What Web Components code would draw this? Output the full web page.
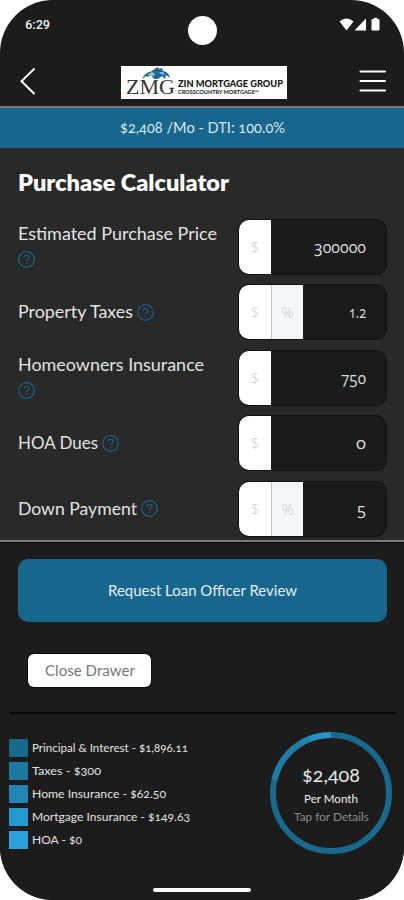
<!DOCTYPE html>
<html lang="en"><head><meta charset="utf-8"><title>Purchase Calculator</title>
<style>
html,body{margin:0;background:#fff}
body{width:404px;height:900px;overflow:hidden;font-family:Lato,"Open Sans",sans-serif;color:#e6e6e6}
</style></head><body>
<zm-phone></zm-phone>
<script>
const define=(name,css,html,init)=>customElements.define(name,class extends HTMLElement{
  connectedCallback(){
    if(this.shadowRoot)return;
    const root=this.attachShadow({mode:'open'});
    root.innerHTML=`<style>*{box-sizing:border-box}${css}</style>`+(typeof html==='function'?html(this):html);
    if(init)init(this,root);
  }
});

/* Single line whose glyphs are widened or narrowed to fill the width given in w. */
define('zm-text',':host{display:inline-block;white-space:nowrap;font-variant-numeric:oldstyle-nums}:host([lining]){font-variant-numeric:lining-nums}span{display:inline-block;transform-origin:0 50%}','<span><slot></slot></span>',(el,root)=>{
  const w=parseFloat(el.getAttribute('w')),s=root.querySelector('span');
  s.style.transform=`scaleX(${(w/s.getBoundingClientRect().width).toFixed(4)})`;
  el.style.width=w+'px';
});

define('zm-status',`:host{display:grid;grid-template-columns:1fr 30px 1fr;height:56px;padding:0 23px 0 25px;align-items:start}
.t{font:500 12.5px/16px Roboto,sans-serif;color:#eee;padding-top:17px}
.cam{width:29px;height:29px;border-radius:50%;background:#fff;margin-top:16px}
svg{justify-self:end;margin-top:17px}`,
`<div class="t"><zm-text w="25" lining>6:29</zm-text></div><div class="cam"></div>
<svg width="42" height="15" viewBox="0 0 42 15" fill="#fff"><path d="M.5 4.5Q7.5-1.5 14.5 4.5L7.5 13.5Z"/><path d="M15.5 13.5H27V1.5Z"/><path d="M32.5 3q0-1 1-1h1.3V.8h3.4V2h1.300q1 0 1 1v9.500q0 1-1 1h-6q-1 0-1-1Z"/></svg>`);

define('zm-logo',`:host{display:flex;width:166px;height:33px;background:#fff;color:#151515;padding:1px 4px 0 5px}
.m{width:50px;display:flex;flex-direction:column}
.m svg{display:block;margin-left:15px;height:12px}
.z{font:21px/20px "Liberation Serif",serif;color:#353535;margin-top:-2px;height:20px}
.r{flex:1;display:flex;flex-direction:column;padding:11px 0 0 2px}
.a{font:900 9.5px/11px Lato,sans-serif;height:11px}.b{font:700 5px/6px Lato,sans-serif;height:7px}`,
`<div class="m"><svg width="31" height="12" viewBox="0 0 31 12"><path d="M1 12Q3 6 10 4.500L15 1 17 0 18 2 21 1 22 4Q28 5 29 11L25 8 24 12 21 9 17 12 13 12 10 8 6 10 5 9Z" fill="#1d6c8f"/><path d="M6 8L11 5 14 7 13 9 9 8ZM18 5L22 5 24 8 20 7Z" fill="#9cc0d0"/></svg><div class="z"><zm-text w="49">ZMG</zm-text></div></div>
<div class="r"><div class="a"><zm-text w="105">ZIN MORTGAGE GROUP</zm-text></div><div class="b"><zm-text w="81">CROSSCOUNTRY MORTGAGE™</zm-text></div></div>`);

define('zm-nav',`:host{display:grid;grid-template-columns:1fr 166px 1fr;align-items:center;height:50px;padding:0 16px 0 20px}
zm-logo{justify-self:center;margin-top:2px}svg{display:block;margin-top:-1px}.e{justify-self:end;margin-right:1px}`,
`<svg width="18" height="28" viewBox="0 0 18 28" fill="none" stroke="#fff" stroke-width="2"><path d="M14.500 1.5L1.5 14.2 14.500 27"/></svg><zm-logo></zm-logo>
<svg class="e" width="29" height="26" viewBox="0 0 29 26" stroke="#fff" stroke-width="2.2" stroke-linecap="round"><path d="M2.5 3.5H27M2.5 13H27M2.5 22.5H27"/></svg>`);

define('zm-summary',':host{display:flex;justify-content:center;align-items:center;height:42px;background:#17668b;border-top:2px solid #777b7e;font-size:14.5px;line-height:20px;color:#d9e8f2;padding:0 0 1px}','<slot></slot>');

define('zm-help',':host{display:inline-block;width:17px;height:17px;vertical-align:-2.5px}svg{display:block}',
'<svg width="17" height="17" viewBox="0 0 17 17" fill="none" stroke="#1b5f80" stroke-width="1.3"><circle cx="8.5" cy="8.5" r="7.8"/><path d="M6 6.8Q6.1 4.4 8.6 4.4T11 6.6Q11 7.8 9.6 8.5 8.5 9 8.5 10.3M8.5 11.8V13.1"/></svg>');

define('zm-field',`:host{display:grid;grid-template-columns:205px 149px;column-gap:15px;align-items:center;height:56px}
.l{font-size:17px;line-height:26px;color:#e3e3e3}
.box{display:flex;height:56px;border-radius:11px;background:#1b1b1b;border:1px solid #121212;overflow:hidden}
.u{width:32px;background:#fff;color:#c9cccc;font:300 15px/54px "Open Sans",sans-serif;text-align:center}
.p{width:32px;border-left:1px solid #bfc3c4;background:#f3f7f9}
.v{flex:1;display:flex;justify-content:flex-end;align-items:center;padding:0 20px 0 0;font:15.5px/20px "Open Sans",sans-serif;color:#ddd}`,
el=>{const a=k=>el.getAttribute(k);return `<div class="l"><zm-text w="${a('lw')}">${a('label')}</zm-text> <zm-help></zm-help></div>
<div class="box"><div class="u">$</div>${el.hasAttribute('percent')?'<div class="u p">%</div>':''}<div class="v"><zm-text w="${a('vw')}">${a('value')}</zm-text></div></div>`});

define('zm-form',`:host{display:block;height:392px;background:#292929;padding:20px 16px 0 18px;overflow:hidden}
h1{margin:0 0 20.5px;font-size:22px;line-height:30px;font-weight:800;color:#fff}
.f{display:grid;gap:9.5px}`,
`<h1><zm-text w="211">Purchase Calculator</zm-text></h1><div class="f">
<zm-field label="Estimated Purchase Price" lw="199" value="300000" vw="52"></zm-field>
<zm-field label="Property Taxes" lw="115" value="1.2" vw="17" percent></zm-field>
<zm-field label="Homeowners Insurance" lw="186" value="750" vw="25"></zm-field>
<zm-field label="HOA Dues" lw="80" value="0" vw="10"></zm-field>
<zm-field label="Down Payment" lw="119" value="5" vw="9" percent></zm-field></div>`);

define('zm-button',`:host{display:flex;align-items:center;justify-content:center;height:63px;border-radius:10px;background:#17668b;color:#e5eff5;font-size:14.5px;line-height:20px}
:host([small]){width:123px;height:33px;border-radius:6px;background:#fff;color:#777;box-shadow:0 0 0 1px #0d0d0d}`,'<slot></slot>');

define('zm-legend',':host{display:grid;gap:5px}div{display:flex;height:18px;align-items:center;gap:4px;font-size:11.5px;line-height:18px;color:#e3e3e3}i{width:19px;height:18px}',
`<div><i style="background:#1a698d"></i><zm-text w="156">Principal &amp; Interest - $1,896.11</zm-text></div>
<div><i style="background:#1c789f"></i><zm-text w="69">Taxes - $300</zm-text></div>
<div><i style="background:#2286b4"></i><zm-text w="134">Home Insurance - $62.50</zm-text></div>
<div><i style="background:#2598cd"></i><zm-text w="158">Mortgage Insurance - $149.63</zm-text></div>
<div><i style="background:#29a3db"></i><zm-text w="50">HOA - $0</zm-text></div>`);

define('zm-ring',`:host{display:grid;width:122px;height:122px}
svg,.c{grid-area:1/1}.c{display:flex;flex-direction:column;align-items:center;padding-top:31px}
.a{font-size:18.5px;line-height:24px}.b{font-size:11.3px;line-height:19px;padding-top:2px;color:#eee}.d{font-size:12px;line-height:18px;color:#8b8b8b}`,
`<svg width="122" height="122" viewBox="0 0 122 122" fill="none" stroke-width="6"><g transform="rotate(-90 61 61)">
<circle cx="61" cy="61" r="58" stroke="#1a698d"/>
<circle cx="61" cy="61" r="58" pathLength="100" stroke="#1f7ba4" stroke-dasharray="12.5 87.5" stroke-dashoffset="-78.7"/>
<circle cx="61" cy="61" r="58" pathLength="100" stroke="#2286b4" stroke-dasharray="2.6 97.4" stroke-dashoffset="-91.2"/>
<circle cx="61" cy="61" r="58" pathLength="100" stroke="#2591c4" stroke-dasharray="6.2 93.8" stroke-dashoffset="-93.8"/></g></svg>
<div class="c"><div class="a"><zm-text w="58">$2,408</zm-text></div><div class="b"><zm-text w="54">Per Month</zm-text></div><div class="d"><zm-text w="75">Tap for Details</zm-text></div></div>`);

define('zm-drawer',`:host{display:flex;flex-direction:column;height:360px;border-top:2px solid #777b7b;box-shadow:inset 0 1px #080808;padding-top:17px;background:#1c1c1c}
.top{margin:0 17px 0 18px}.close{margin:32px 0 0 28px}hr{width:387px;margin:25px 0 0 9px;border:0;border-top:2px solid #080808}
.info{display:flex;justify-content:space-between;padding:18px 12px 0 9px}zm-legend{padding-top:7px;align-self:start}
.home{width:98px;height:4px;border-radius:2px;background:#fff;margin:34px auto 0}`,
`<zm-button class="top"><zm-text w="189">Request Loan Officer Review</zm-text></zm-button>
<zm-button small class="close"><zm-text w="90">Close Drawer</zm-text></zm-button><hr>
<div class="info"><zm-legend></zm-legend><zm-ring></zm-ring></div><div class="home"></div>`);

define('zm-phone',':host{display:block;width:404px;height:900px;border-radius:53px;overflow:hidden;background:#1c1c1c}',
`<zm-status></zm-status><zm-nav></zm-nav><zm-summary><zm-text w="165">$2,408 /Mo - DTI: 100.0%</zm-text></zm-summary><zm-form></zm-form><zm-drawer></zm-drawer>`);
</script></body></html>
